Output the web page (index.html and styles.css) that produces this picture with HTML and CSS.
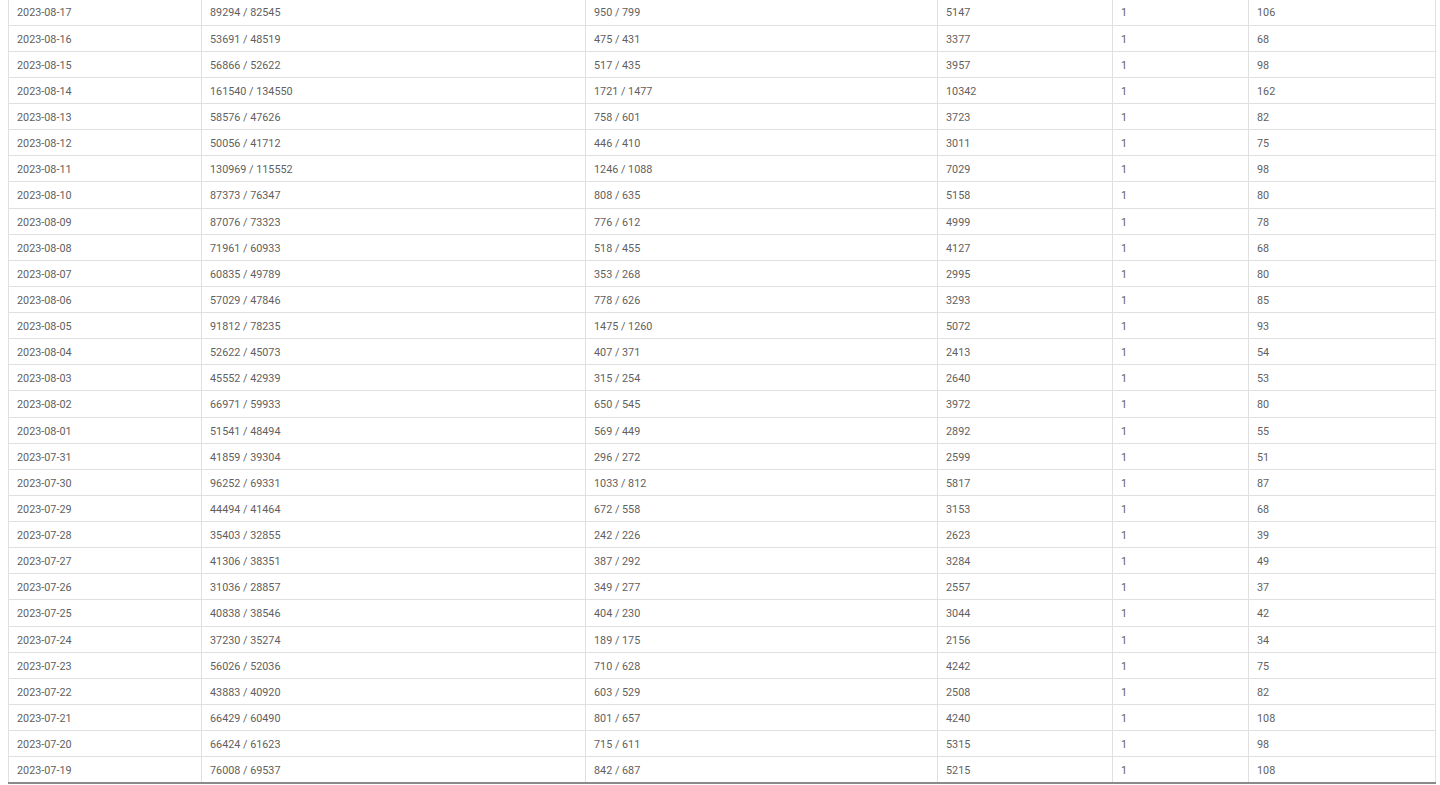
FILE: index.html
```html
<!DOCTYPE html>
<html>
<head>
<meta charset="utf-8">
<link rel="stylesheet" href="styles.css">
</head>
<body>
<table class="stats">
<colgroup>
<col class="c-date"><col class="c-a"><col class="c-b"><col class="c-c"><col class="c-d"><col class="c-e">
</colgroup>
<tbody>
<tr><td>2023-08-17</td><td>89294 / 82545</td><td>950 / 799</td><td>5147</td><td>1</td><td>106</td></tr>
<tr><td>2023-08-16</td><td>53691 / 48519</td><td>475 / 431</td><td>3377</td><td>1</td><td>68</td></tr>
<tr><td>2023-08-15</td><td>56866 / 52622</td><td>517 / 435</td><td>3957</td><td>1</td><td>98</td></tr>
<tr><td>2023-08-14</td><td>161540 / 134550</td><td>1721 / 1477</td><td>10342</td><td>1</td><td>162</td></tr>
<tr><td>2023-08-13</td><td>58576 / 47626</td><td>758 / 601</td><td>3723</td><td>1</td><td>82</td></tr>
<tr><td>2023-08-12</td><td>50056 / 41712</td><td>446 / 410</td><td>3011</td><td>1</td><td>75</td></tr>
<tr><td>2023-08-11</td><td>130969 / 115552</td><td>1246 / 1088</td><td>7029</td><td>1</td><td>98</td></tr>
<tr><td>2023-08-10</td><td>87373 / 76347</td><td>808 / 635</td><td>5158</td><td>1</td><td>80</td></tr>
<tr><td>2023-08-09</td><td>87076 / 73323</td><td>776 / 612</td><td>4999</td><td>1</td><td>78</td></tr>
<tr><td>2023-08-08</td><td>71961 / 60933</td><td>518 / 455</td><td>4127</td><td>1</td><td>68</td></tr>
<tr><td>2023-08-07</td><td>60835 / 49789</td><td>353 / 268</td><td>2995</td><td>1</td><td>80</td></tr>
<tr><td>2023-08-06</td><td>57029 / 47846</td><td>778 / 626</td><td>3293</td><td>1</td><td>85</td></tr>
<tr><td>2023-08-05</td><td>91812 / 78235</td><td>1475 / 1260</td><td>5072</td><td>1</td><td>93</td></tr>
<tr><td>2023-08-04</td><td>52622 / 45073</td><td>407 / 371</td><td>2413</td><td>1</td><td>54</td></tr>
<tr><td>2023-08-03</td><td>45552 / 42939</td><td>315 / 254</td><td>2640</td><td>1</td><td>53</td></tr>
<tr><td>2023-08-02</td><td>66971 / 59933</td><td>650 / 545</td><td>3972</td><td>1</td><td>80</td></tr>
<tr><td>2023-08-01</td><td>51541 / 48494</td><td>569 / 449</td><td>2892</td><td>1</td><td>55</td></tr>
<tr><td>2023-07-31</td><td>41859 / 39304</td><td>296 / 272</td><td>2599</td><td>1</td><td>51</td></tr>
<tr><td>2023-07-30</td><td>96252 / 69331</td><td>1033 / 812</td><td>5817</td><td>1</td><td>87</td></tr>
<tr><td>2023-07-29</td><td>44494 / 41464</td><td>672 / 558</td><td>3153</td><td>1</td><td>68</td></tr>
<tr><td>2023-07-28</td><td>35403 / 32855</td><td>242 / 226</td><td>2623</td><td>1</td><td>39</td></tr>
<tr><td>2023-07-27</td><td>41306 / 38351</td><td>387 / 292</td><td>3284</td><td>1</td><td>49</td></tr>
<tr><td>2023-07-26</td><td>31036 / 28857</td><td>349 / 277</td><td>2557</td><td>1</td><td>37</td></tr>
<tr><td>2023-07-25</td><td>40838 / 38546</td><td>404 / 230</td><td>3044</td><td>1</td><td>42</td></tr>
<tr><td>2023-07-24</td><td>37230 / 35274</td><td>189 / 175</td><td>2156</td><td>1</td><td>34</td></tr>
<tr><td>2023-07-23</td><td>56026 / 52036</td><td>710 / 628</td><td>4242</td><td>1</td><td>75</td></tr>
<tr><td>2023-07-22</td><td>43883 / 40920</td><td>603 / 529</td><td>2508</td><td>1</td><td>82</td></tr>
<tr><td>2023-07-21</td><td>66429 / 60490</td><td>801 / 657</td><td>4240</td><td>1</td><td>108</td></tr>
<tr><td>2023-07-20</td><td>66424 / 61623</td><td>715 / 611</td><td>5315</td><td>1</td><td>98</td></tr>
<tr><td>2023-07-19</td><td>76008 / 69537</td><td>842 / 687</td><td>5215</td><td>1</td><td>108</td></tr>
</tbody>
</table>
</body>
</html>
```

FILE: styles.css
```css
html, body {
  background: #ffffff;
}
body {
  margin: -1px 0 0 8px;
  font-family: Roboto, "Liberation Sans", sans-serif;
  font-size: 10.8px;
  color: #5f5f5f;
  overflow: hidden;
}
.stats {
  width: 1428px;
  table-layout: fixed;
  border-collapse: collapse;
  border-left: 1px solid #e0e0e0;
  border-right: 1px solid #e0e0e0;
  border-bottom: 2px solid #8a8a8a;
}
.c-date { width: 193px; }
.c-a { width: 384px; }
.c-b { width: 352px; }
.c-c { width: 175px; }
.c-d { width: 136px; }
.c-e { width: 187px; }
.stats td {
  height: 26.14px;
  padding: 2px 8px 0 8px;
  box-sizing: border-box;
  border: 1px solid #e0e0e0;
  border-top: none;
  white-space: nowrap;
  line-height: 13px;
}
.stats tr:last-child td {
  border-bottom: 2px solid #8a8a8a;
}
```
